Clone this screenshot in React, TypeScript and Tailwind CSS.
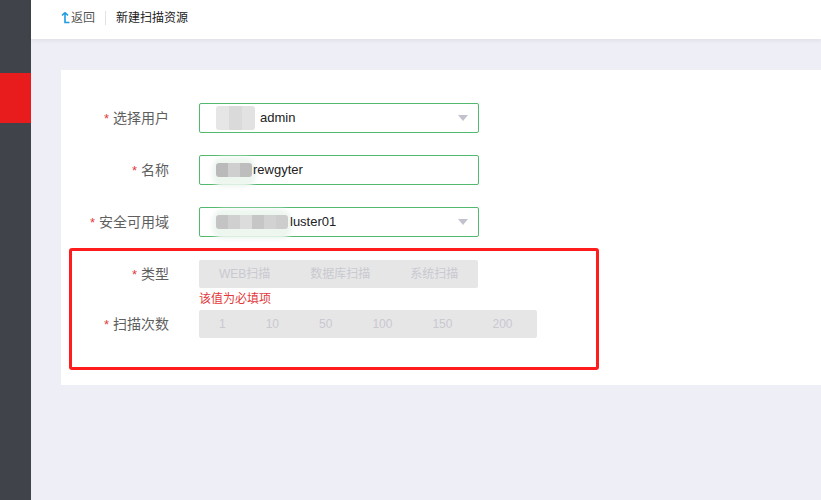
import React from "react";

const font = { fontFamily: '"Liberation Sans", "Noto Sans CJK SC", sans-serif' };

type BlurProps = { cells: string[]; cellW: number; h: number; haze?: boolean };

// mosaic used to hide part of the value
const Blur: React.FC<BlurProps> = ({ cells, cellW, h, haze }) => (
  <span className="relative inline-flex shrink-0">
    {haze && (
      <span className="absolute -left-[4px] -right-[4px] -top-[6px] -bottom-[10px] rounded-[12px] bg-[#eef6f0] blur-[2px]" />
    )}
    <span className="relative flex blur-[0.6px] rounded-[3px] overflow-hidden">
      {cells.map((c, i) => (
        <span key={i} style={{ background: c, width: cellW, height: h }} />
      ))}
    </span>
  </span>
);

const Label: React.FC<{ text: string }> = ({ text }) => (
  <div className="w-[108px] shrink-0 text-right text-[14px] text-[#5f5f5f]">
    <span className="text-[#e4393c] mr-[4px] text-[13px]">*</span>
    {text}
  </div>
);

const Caret = () => (
  <svg width="10" height="6" viewBox="0 0 10 6" className="ml-auto mr-[10px]">
    <path d="M0 0 H10 L5 6 Z" fill="#c2c2cc" />
  </svg>
);

const App: React.FC = () => {
  const types = ["WEB扫描", "数据库扫描", "系统扫描"];
  const counts = ["1", "10", "50", "100", "150", "200"];

  return (
    <div className="flex min-h-[500px] w-full" style={font}>
      <aside className="w-[31px] shrink-0 bg-[#404349]">
        <div className="h-[73px]" />
        <div className="h-[50px] bg-[#e81c1c]" />
      </aside>

      <main className="flex-1 bg-[#eeeef6]">
        <header className="h-[39px] bg-white flex items-center pl-[30px] pb-[4px] shadow-[0_2px_4px_rgba(0,0,40,0.06)]">
          <svg width="9" height="13" viewBox="0 0 9 13" className="mr-[1px]">
            <path d="M4 1.5 L1 4.5 M4 1.5 L7 4.5 M4 1.5 V11.5 H8.5" stroke="#1e9be3" strokeWidth="1.6" fill="none" />
          </svg>
          <span className="text-[12px] text-[#555]">返回</span>
          <span className="mx-[10px] h-[14px] w-px bg-[#e3e3e3]" />
          <span className="text-[12px] text-[#222]">新建扫描资源</span>
        </header>

        <div className="pl-[30px] pt-[31px]">
          <div className="relative bg-white pt-[33px] pb-[47px]">
            <div className="flex items-center h-[30px]">
              <Label text="选择用户" />
              <div className="ml-[30px] w-[280px] h-[30px] border border-[#52b96e] rounded-[2px] flex items-center pl-[16px] text-[13px] text-[#222]">
                <Blur cells={["#e6e6e6", "#dadada", "#e2e2e2"]} cellW={13} h={24} />
                <span className="relative ml-[5px]">admin</span>
                <Caret />
              </div>
            </div>

            <div className="flex items-center h-[30px] mt-[22px]">
              <Label text="名称" />
              <div className="ml-[30px] w-[280px] h-[30px] border border-[#52b96e] rounded-[2px] flex items-center pl-[16px] text-[13px] text-[#222]">
                <Blur cells={["#bababa", "#cfcfcf", "#bdbdbd"]} cellW={12} h={14} haze />
                <span className="relative ml-[1px]">rewgyter</span>
              </div>
            </div>

            <div className="flex items-center h-[30px] mt-[22px]">
              <Label text="安全可用域" />
              <div className="ml-[30px] w-[280px] h-[30px] border border-[#52b96e] rounded-[2px] flex items-center pl-[16px] text-[13px] text-[#222]">
                <Blur cells={["#c4c4c4", "#d0d0d0", "#dcdcdc", "#c6c6c6", "#d2d2d2", "#cdcdcd"]} cellW={12} h={14} haze />
                <span className="relative ml-[2px]">luster01</span>
                <Caret />
              </div>
            </div>

            <div className="flex items-center h-[28px] mt-[23px]">
              <Label text="类型" />
              <div className="ml-[30px] h-[28px] w-[279px] bg-[#e6e6e6] rounded-[2px] flex items-center px-[20px] gap-[40px] text-[12px] text-[#c9c9d1] whitespace-nowrap overflow-hidden">
                {types.map((t) => (
                  <span key={t} className="shrink-0">{t}</span>
                ))}
              </div>
            </div>
            <div className="ml-[138px] h-[22px] flex items-center text-[12px] text-[#e4393c]">该值为必填项</div>

            <div className="flex items-center h-[28px]">
              <Label text="扫描次数" />
              <div className="ml-[30px] h-[28px] w-[338px] bg-[#e6e6e6] rounded-[2px] flex items-center px-[20px] gap-[40px] text-[12px] text-[#c9c9d1]">
                {counts.map((c) => (
                  <span key={c}>{c}</span>
                ))}
              </div>
            </div>

            {/* annotation box */}
            <div className="absolute left-[8px] top-[178px] w-[530px] h-[122px] border-[3px] border-[#ff1c1c] rounded-[3px] pointer-events-none" />
          </div>
        </div>
      </main>
    </div>
  );
};

export default App;
